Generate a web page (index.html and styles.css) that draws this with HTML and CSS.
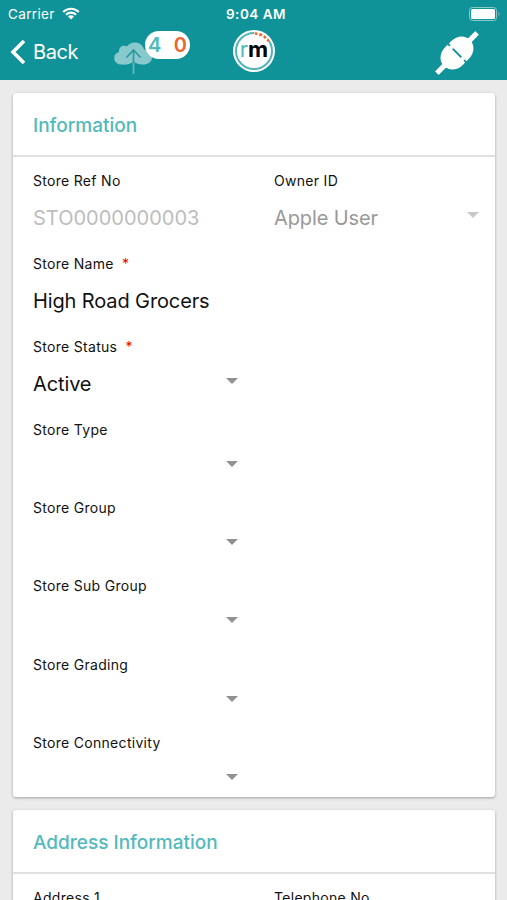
FILE: index.html
```
<!DOCTYPE html>
<html lang="en">
<head>
  <meta charset="UTF-8">
  <meta name="viewport" content="width=device-width, initial-scale=1.0">
  <title>Store</title>
  <link rel="stylesheet" href="styles.css">
</head>
<body>
  <header>
    <div class="status-bar">
      <div class="carrier">
        <span>Carrier</span>
        <svg class="wifi" viewBox="0 0 18 13"><path d="M1.2 5a11 11 0 0 1 15.6 0M4 7.8a7 7 0 0 1 10 0" fill="none" stroke="#fff" stroke-width="2.2"/><path d="M9 12.5L6 9.6a4.2 4.2 0 0 1 6 0z" fill="#fff"/></svg>
      </div>
      <span class="clock">9:04 AM</span>
      <svg class="battery" viewBox="0 0 32 14"><rect x=".5" y=".5" width="27" height="13" rx="3" fill="none" stroke="#8bcaca"/><rect x="2" y="2" width="24" height="10" rx="1.5" fill="#fff"/><path d="M29.5 5v4q2-2 0-4z" fill="#8bcaca"/></svg>
    </div>
    <nav>
      <a class="back" href="#">
        <svg viewBox="0 0 16 26"><path d="M14 2L3 13l11 11" fill="none" stroke="#fff" stroke-width="3.6"/></svg>
        <span>Back</span>
      </a>
      <div class="sync">
        <svg class="cloud" viewBox="0 0 38 34"><path d="M8 24.500C-1 25-2.500 14 5 12 4.500 7 9 4.500 13 6.500 17 .5 28 1 30 9.500c5 .5 8 4 8 8 0 5-5 7.500-10 7-3 0-5-1-8.500-2.500C16 24 12 25 8 24.500z" fill="#87c9cd"/><path d="M19.500 24V10M12.500 17.500l7-7.500 7 7.500" fill="none" stroke="#2b9a9e" stroke-width="1.600"/><path d="M19.500 23v11" stroke="#6bbcc0" stroke-width="1.600"/></svg>
        <div class="badge"><span class="pending">4</span><span class="failed">0</span></div>
      </div>
      <div class="logo">
        <svg viewBox="0 0 42 42"><circle cx="21" cy="21" r="21" fill="#fff"/><circle cx="21" cy="21" r="18" fill="none" stroke="#53b5ba" stroke-width="2"/><path d="M21 3A18 18 0 0 1 36 11" fill="none" stroke="#fff" stroke-width="4"/><path d="M21.700 3.500A17.500 17.500 0 0 1 35.800 11.300" fill="none" stroke="#ee642c" stroke-width="2.600" stroke-dasharray="2.800 1.900"/></svg>
        <span class="logo-text"><span>r</span><b>m</b></span>
      </div>
      <svg class="plug" viewBox="0 0 44 44"><g transform="rotate(-45 22 22)" fill="#fff"><rect x="-6.500" y="19.400" width="14" height="5.200" rx=".6"/><rect x="36.500" y="19.400" width="14" height="5.200" rx=".6"/><path d="M21 9.500h-3C9 9.500 3.500 15.500 3.500 22S9 34.500 18 34.500h3z"/><path d="M23 9.500h3c9 0 14.500 6 14.500 12.500S35 34.500 26 34.500h-3z"/><rect x="20.500" y="12" width="3" height="4"/><rect x="20.500" y="28" width="3" height="4"/></g></svg>
    </nav>
  </header>

  <main>
    <section class="card">
      <h2>Information</h2>
      <div class="fields">
        <div class="field filled">
          <label>Store Ref No</label>
          <div class="value ref">STO0000000003</div>
        </div>
        <div class="field filled">
          <label>Owner ID</label>
          <div class="value select disabled">Apple User</div>
        </div>
        <div class="field filled left">
          <label>Store Name <span class="required">*</span></label>
          <div class="value">High Road Grocers</div>
        </div>
        <div class="field filled left">
          <label>Store Status <span class="required">*</span></label>
          <div class="value select">Active</div>
        </div>
        <div class="field left">
          <label>Store Type</label>
          <div class="value select"></div>
        </div>
        <div class="field left">
          <label>Store Group</label>
          <div class="value select"></div>
        </div>
        <div class="field left">
          <label>Store Sub Group</label>
          <div class="value select"></div>
        </div>
        <div class="field left">
          <label>Store Grading</label>
          <div class="value select"></div>
        </div>
        <div class="field left">
          <label>Store Connectivity</label>
          <div class="value select"></div>
        </div>
      </div>
    </section>

    <section class="card">
      <h2>Address Information</h2>
      <div class="fields">
        <div class="field filled">
          <label>Address 1</label>
          <div class="value"></div>
        </div>
        <div class="field filled">
          <label>Telephone No</label>
          <div class="value"></div>
        </div>
      </div>
    </section>
  </main>
</body>
</html>
```
FILE: styles.css
```
:root {
  --primary-color: #109398;
  --accent-color: #53b9bd;
  --orange: #ee642c;
  --background-color: #ebebeb;
  --white: #ffffff;
  --text-color: #111111;
}

* {
  box-sizing: border-box;
  margin: 0;
  padding: 0;
}

body {
  height: 900px;
  overflow: hidden;
  font-family: Inter, "Liberation Sans", sans-serif;
  background-color: var(--background-color);
  color: var(--text-color);
}

header {
  height: 80px;
  background-color: var(--primary-color);
  color: var(--white);
}

.status-bar {
  display: grid;
  grid-template-columns: 1fr auto 1fr;
  align-items: center;
  height: 27px;
  padding: 0 6px 0 8px;
}

.carrier {
  display: flex;
  align-items: center;
  gap: 7px;
  font-size: 13.5px;
  letter-spacing: 0.35px;
}

.wifi {
  width: 18px;
  height: 13px;
}

.clock {
  padding-left: 3px;
  font-size: 13.5px;
  font-weight: 600;
  letter-spacing: 0.5px;
}

.battery {
  justify-self: end;
  width: 32px;
  height: 14px;
}

nav {
  display: grid;
  grid-template-columns: 114px 119px 1fr auto;
  height: 53px;
  padding-right: 28px;
}

.back {
  display: flex;
  align-items: center;
  gap: 7px;
  height: 50px;
  padding-left: 10px;
  color: var(--white);
  font-size: 20px;
  letter-spacing: -0.4px;
  text-decoration: none;
}

.back svg {
  width: 16px;
  height: 26px;
}

.sync {
  position: relative;
}

.cloud {
  width: 38px;
  height: 34px;
  margin-top: 13px;
}

.badge {
  position: absolute;
  top: 4px;
  left: 31px;
  display: flex;
  justify-content: space-between;
  align-items: center;
  width: 45px;
  height: 28px;
  padding: 0 3px;
  border-radius: 14px;
  background-color: var(--white);
  font-size: 20px;
  font-weight: 600;
}

.pending {
  color: var(--accent-color);
}

.failed {
  color: var(--orange);
}

.logo {
  display: grid;
  width: 42px;
  height: 42px;
  margin-top: 3px;
  place-items: center;
}

.logo svg,
.logo-text {
  grid-area: 1 / 1;
}

.logo-text {
  color: var(--accent-color);
  font-size: 22px;
  line-height: 1;
  padding-bottom: 5px;
}

.logo-text b {
  color: #000;
}

.plug {
  width: 44px;
  height: 44px;
  margin-top: 4px;
  overflow: visible;
}

main {
  display: flex;
  flex-direction: column;
  gap: 13px;
  padding: 13px 12px 0 13px;
}

.card {
  background-color: var(--white);
  border-radius: 3px;
  box-shadow: 0 1px 3px rgba(0, 0, 0, 0.32);
}

.card h2 {
  height: 64px;
  padding-left: 20px;
  border-bottom: 2px solid #e0e0e0;
  color: var(--accent-color);
  font-size: 19px;
  font-weight: 500;
  line-height: 65px;
}

.fields {
  display: grid;
  grid-template-columns: 241px 241px;
  row-gap: 10px;
  padding-top: 10px;
}

.field {
  height: 68.2px;
  padding: 0 16px 0 20px;
}

.field.filled {
  height: 73px;
}

.field.left {
  grid-column: 1;
}

label {
  display: block;
  height: 26px;
  font-size: 14px;
  line-height: 28px;
  letter-spacing: 0.3px;
}

.required {
  margin-left: 4px;
  color: #f00000;
}

.value {
  display: flex;
  align-items: center;
  height: 49px;
  font-size: 20px;
  letter-spacing: -0.12px;
}

.select::after {
  content: "";
  margin: -5px 0 0 auto;
  border: 6px solid transparent;
  border-top-color: #919191;
  border-bottom: 0;
}

.ref {
  color: #bdbdbd;
  letter-spacing: 0;
}

.disabled {
  color: #999;
}

.disabled::after {
  border-top-color: #c8c8c8;
}
```
